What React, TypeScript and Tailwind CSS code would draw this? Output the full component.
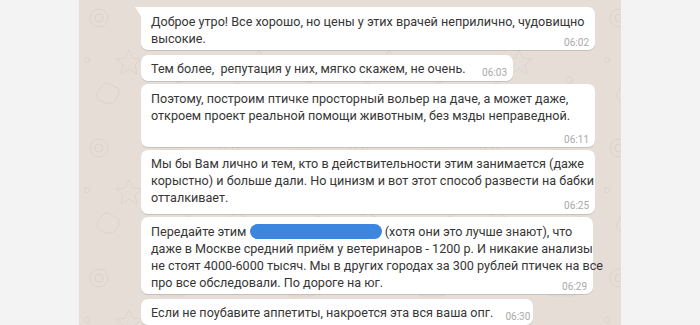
import React from "react";

function Pattern() {
  return (
    <svg className="absolute inset-0 w-full h-full" xmlns="http://www.w3.org/2000/svg">
      <defs>
        <pattern id="wa" width="130" height="130" patternUnits="userSpaceOnUse">
          <g fill="none" stroke="#dad1ca" strokeWidth="1" opacity="0.9">
            <circle cx="20" cy="18" r="9" />
            <circle cx="20" cy="18" r="4" />
            <path d="M50 50 l4 8 9 1 -7 6 2 9 -8 -5 -8 5 2 -9 -7 -6 9 -1z" />
            <rect x="80" y="20" width="26" height="16" rx="3" />
            <path d="M80 20 l13 9 13 -9" />
            <circle cx="100" cy="80" r="3" />
            <circle cx="110" cy="88" r="2" />
            <path d="M20 90 q6 -12 14 -4 q10 2 4 12 q-4 8 -14 4 q-10 -4 -4 -12z" />
            <path d="M70 100 q10 -14 22 0 q-11 12 -22 0z" />
            <circle cx="8" cy="60" r="2.5" />
            <path d="M112 116 l3 6 6 1 -5 4 1 6 -5 -3 -5 3 1 -6 -5 -4 6 -1z" />
          </g>
        </pattern>
      </defs>
      <rect width="100%" height="100%" fill="url(#wa)" />
    </svg>
  );
}

const bubble =
  "flex flex-col bg-white rounded-[7px] px-[10px] shadow-[0_1px_0.5px_rgba(0,0,0,0.13)] whitespace-nowrap";
const time = "self-end text-[10px] leading-[12px] text-[#a9a9a9] -mr-[4px]";

export default function App() {
  return (
    <div
      className="w-[700px] h-[325px] bg-[#f3f3f3] flex justify-center overflow-hidden"
      style={{ fontFamily: 'Roboto, "Noto Sans", sans-serif' }}
    >
      <div className="relative w-[542px] h-full bg-[#e6ddd7] overflow-hidden">
        <Pattern />
        <div className="relative flex flex-col items-start pl-[62px] pt-[7px] text-[12.6px] leading-[17px] text-[#363636]">
          {/* 1 */}
          <div className={`${bubble} relative w-[454px] rounded-tl-none pt-[6px] pb-[1px]`}>
            <span className="absolute -left-[6px] top-0 w-0 h-0 border-t-[9px] border-t-white border-l-[6px] border-l-transparent" />
            <div>
              Доброе утро! Все хорошо, но цены у этих врачей неприлично, чудовищно
              <br />
              высокие.
            </div>
            <span className={`${time} -mt-[10px]`}>06:02</span>
          </div>
          {/* 2 */}
          <div className={`${bubble} mt-[5px] w-[372px] flex-row items-end justify-between gap-[12px] pt-[5px] pb-[2px]`}>
            <span className="pb-[2px]">Тем более,&nbsp; репутация у них, мягко скажем, не очень.</span>
            <span className={time}>06:03</span>
          </div>
          {/* 3 */}
          <div className={`${bubble} mt-[3px] w-[454px] pt-[6px] pb-[1px]`}>
            <div>
              Поэтому, построим птичке просторный вольер на даче, а может даже,
              <br />
              откроем проект реальной помощи животным, без мзды неправедной.
            </div>
            <span className={`${time} mt-[10px]`}>06:11</span>
          </div>
          {/* 4 */}
          <div className={`${bubble} mt-[3px] w-[454px] pt-[5px] pb-[2px]`}>
            <div>
              Мы бы Вам лично и тем, кто в действительности этим занимается (даже
              <br />
              корыстно) и больше дали. Но цинизм и вот этот способ развести на бабки
              <br />
              отталкивает.
            </div>
            <span className={`${time} -mt-[6px]`}>06:25</span>
          </div>
          {/* 5 */}
          <div className={`${bubble} mt-[3px] w-[452px] pt-[6px] pb-[1px]`}>
            <div>
              Передайте этим{" "}
              <span className="inline-block align-middle w-[132px] h-[15px] -mt-[2px] rounded-full bg-[#3d86e0]" />{" "}
              (хотя они это лучше знают), что
              <br />
              даже в Москве средний приём у ветеринаров - 1200 р. И никакие анализы
              <br />
              не стоят 4000-6000 тысяч. Мы в других городах за 300 рублей птичек на все
              <br />
              про все обследовали. По дороге на юг.
            </div>
            <span className={`${time} -mt-[10px]`}>06:29</span>
          </div>
          {/* 6 */}
          <div className={`${bubble} mt-[5px] w-[392px] flex-row items-end justify-between gap-[12px] pt-[5px] pb-[2px]`}>
            <span className="pb-[2px]">Если не поубавите аппетиты, накроется эта вся ваша опг.</span>
            <span className={time}>06:30</span>
          </div>
        </div>
      </div>
    </div>
  );
}
